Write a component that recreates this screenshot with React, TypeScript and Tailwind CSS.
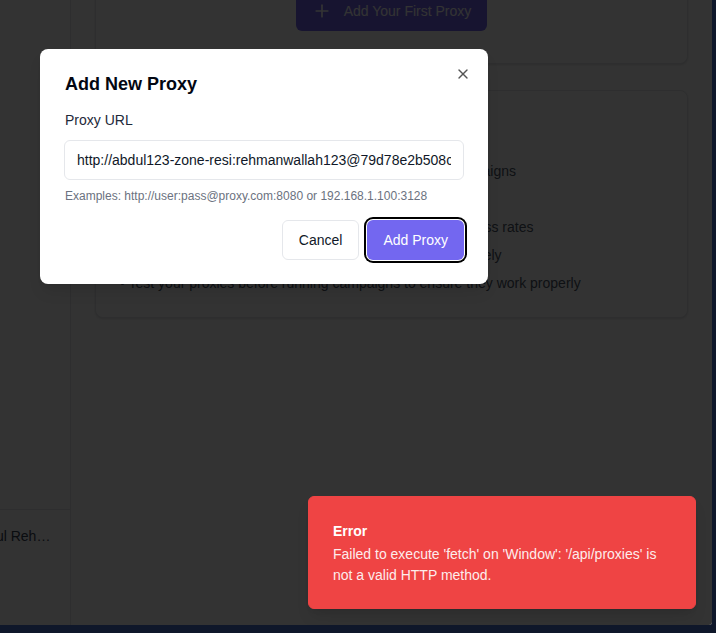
import { Plus, Server, X } from "lucide-react";

const tips = [
  "• Add multiple proxies to distribute traffic across your campaigns",
  "• Supported formats: HTTP, HTTPS and SOCKS5 proxies",
  "• Use high-quality residential proxies for much better success rates",
  "• Keep your proxy credentials private and store them securely",
  "• Test your proxies before running campaigns to ensure they work properly",
];

function Sidebar() {
  return (
    <aside className="-ml-[97px] flex w-[168px] shrink-0 flex-col border-r border-gray-200 bg-white">
      <div className="flex-1" />
      <div className="h-[116px] border-t border-gray-200 p-4">
        <div className="flex items-start gap-3">
          <div className="h-10 w-10 shrink-0 rounded-full bg-indigo-100" />
          <span className="min-w-0 flex-1 truncate text-sm leading-5 text-gray-700">Abdul Rehman</span>
        </div>
      </div>
    </aside>
  );
}

function Content() {
  return (
    <main className="flex-1 overflow-hidden px-6 pt-6">
      <div className="-mt-[210px] flex flex-col gap-[26px]">
        {/* empty state */}
        <div className="rounded-lg border border-gray-200 bg-white p-8 text-center shadow-sm">
          <div className="mx-auto mb-4 flex h-12 w-12 items-center justify-center rounded-full bg-gray-100">
            <Server className="h-6 w-6 text-gray-400" />
          </div>
          <h3 className="mb-2 text-lg leading-7 font-semibold text-gray-900">No proxies configured</h3>
          <p className="mb-6 text-sm leading-5 text-gray-500">Add a proxy to route your campaign traffic.</p>
          <button className="inline-flex h-10 items-center gap-3 rounded-md bg-[#7367f0] px-4 text-sm text-white">
            <Plus className="h-5 w-5" />
            Add Your First Proxy
          </button>
        </div>

        <div className="rounded-lg border border-gray-200 bg-white p-6 shadow-sm">
          <h3 className="mb-[18px] text-lg leading-7 font-semibold text-gray-900">Proxy Tips</h3>
          <ul className="space-y-2 text-sm leading-5 text-gray-600">
            {tips.map((t) => (
              <li key={t}>{t}</li>
            ))}
          </ul>
        </div>
      </div>
    </main>
  );
}

function AddProxyDialog() {
  return (
    <div className="absolute top-[49px] left-[40px] z-10 w-[448px] rounded-lg bg-white p-6 shadow-lg">
      <button className="absolute top-[17px] right-[17px] text-[#555]">
        <X className="h-4 w-4" />
      </button>
      <h2 className="mt-[2px] pl-px text-lg leading-none font-bold text-gray-950">Add New Proxy</h2>
      <label className="mt-[17px] block pl-px text-sm leading-5 text-gray-800">Proxy URL</label>
      <input
        readOnly
        value="http://abdul123-zone-resi:rehmanwallah123@79d78e2b508c3a1e.na.ipidea.online:2333"
        className="mt-[10px] h-10 w-full rounded-md border border-gray-200 px-3 text-sm text-gray-900 outline-none"
      />
      <p className="mt-2 pl-px text-xs leading-4 text-[#6b7280]">
        Examples: http://user:pass@proxy.com:8080 or 192.168.1.100:3128
      </p>
      <div className="mt-4 flex justify-end gap-2">
        <button className="h-10 rounded-md border border-gray-200 bg-white px-4 text-sm text-gray-900">Cancel</button>
        <button className="h-10 rounded-md bg-[#7367f0] px-4 text-sm text-white shadow-[0_0_0_1px_#fff,0_0_0_3px_#000]">
          Add Proxy
        </button>
      </div>
    </div>
  );
}

function ErrorToast() {
  return (
    <div className="absolute right-4 bottom-4 z-10 w-[388px] rounded-md border border-[#ef4444] bg-[#ef4444] px-6 pt-6 pb-[22px] pr-8 text-white shadow-lg">
      <div className="text-sm leading-5 font-bold">Error</div>
      <div className="mt-[3px] text-sm leading-[21px] opacity-90">
        Failed to execute 'fetch' on 'Window': '/api/proxies' is not a valid HTTP method.
      </div>
    </div>
  );
}

export default function App() {
  return (
    <div className="min-h-screen bg-[#0f172a] font-['Liberation_Sans',Arial,sans-serif]">
      <div className="relative flex h-[625px] w-[712px] overflow-hidden rounded-br-[3px] bg-white">
        <Sidebar />
        <Content />
        <div className="absolute inset-0 bg-black/80" />
        <AddProxyDialog />
        <ErrorToast />
      </div>
    </div>
  );
}
